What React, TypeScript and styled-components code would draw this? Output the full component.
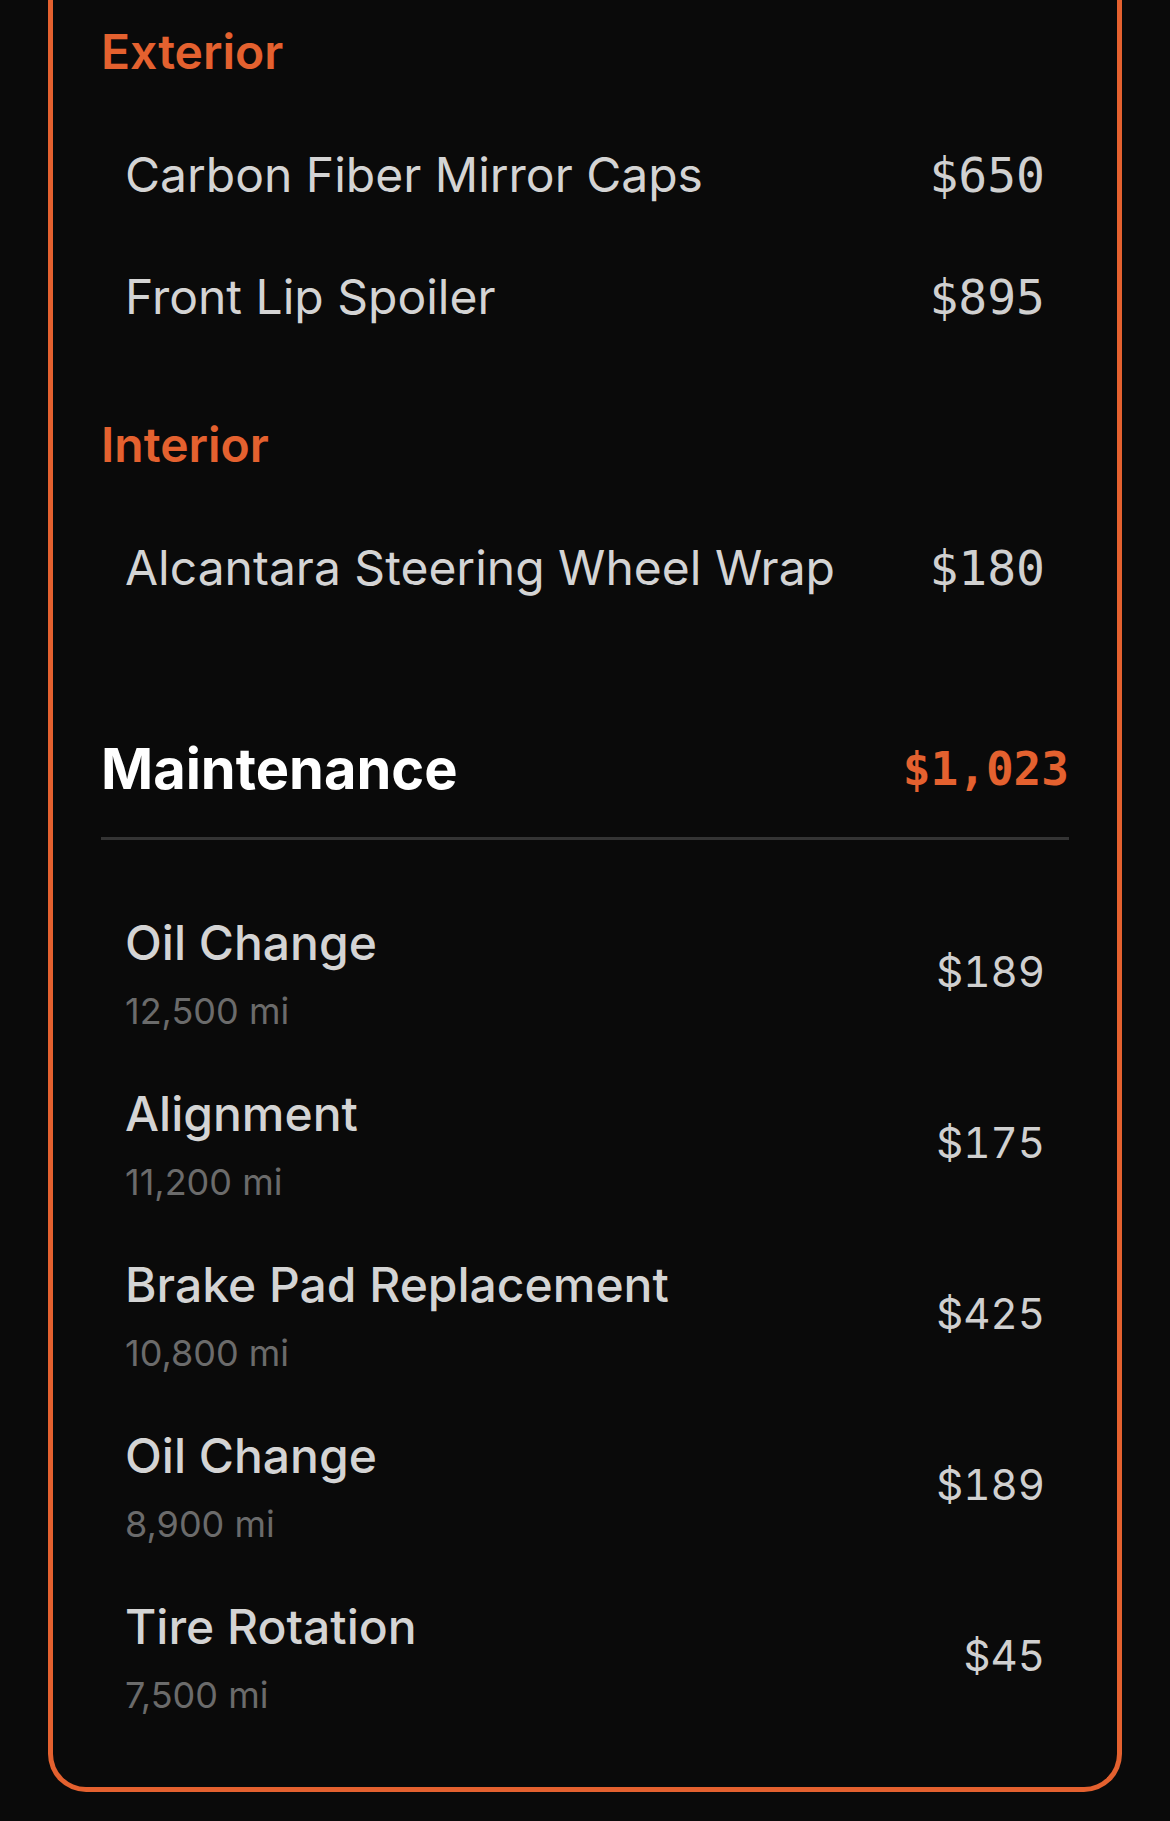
import React from "react";
import styled, { createGlobalStyle } from "styled-components";

const ORANGE = "#e4612f";

const GlobalStyle = createGlobalStyle`
  html, body {
    margin: 0;
    padding: 0;
    background: #0a0a0a;
  }
  body {
    font-family: Inter, "Noto Sans", sans-serif;
    -webkit-font-smoothing: antialiased;
  }
`;

const Page = styled.div`
  padding: 0 48px 48px;
  background: #0a0a0a;
  min-height: 1821px;
  box-sizing: border-box;
`;

const Card = styled.section`
  border: 5px solid ${ORANGE};
  border-top: none;
  border-radius: 0 0 38px 38px;
  padding: 19px 48px 46px;
`;

const Group = styled.div<{ $first?: boolean }>`
  margin-top: ${(p) => (p.$first ? "0" : "54px")};
`;

const GroupTitle = styled.h3`
  margin: 0 0 29px;
  font-family: Inter, sans-serif;
  font-weight: 600;
  font-size: 48px;
  line-height: 66px;
  color: ${ORANGE};
`;

const AccessoryRow = styled.div`
  display: flex;
  justify-content: space-between;
  align-items: center;
  padding: 25px 24px;
`;

const AccessoryName = styled.span`
  font-family: Inter, sans-serif;
  font-weight: 400;
  font-size: 48px;
  line-height: 72px;
  color: #d4d4d4;
`;

const MonoPrice = styled.span`
  font-family: "DejaVu Sans Mono", "Liberation Mono", monospace;
  font-size: 48px;
  line-height: 72px;
  color: #d0d0d0;
`;

const Section = styled.div`
  margin-top: 98px;
`;

const SectionHeader = styled.div`
  display: flex;
  justify-content: space-between;
  align-items: center;
  padding-bottom: 26px;
  border-bottom: 3px solid #343434;
`;

const SectionTitle = styled.h2`
  margin: 0;
  font-family: Inter, sans-serif;
  font-weight: 700;
  font-size: 56px;
  line-height: 84px;
  color: #ffffff;
`;

const SectionTotal = styled.span`
  font-family: "DejaVu Sans Mono", "Liberation Mono", monospace;
  font-weight: 700;
  font-size: 46px;
  color: ${ORANGE};
`;

const ServiceList = styled.div`
  padding-top: 46px;
`;

const ServiceRow = styled.div`
  display: flex;
  justify-content: space-between;
  align-items: center;
  padding: 21px 24px 22px;
`;

const ServiceInfo = styled.div`
  display: flex;
  flex-direction: column;
`;

const ServiceName = styled.span`
  font-family: Inter, sans-serif;
  font-weight: 500;
  font-size: 48px;
  line-height: 72px;
  color: #d4d4d4;
`;

const ServiceMiles = styled.span`
  margin-top: 8px;
  font-family: Inter, sans-serif;
  font-weight: 400;
  font-size: 36px;
  line-height: 48px;
  color: #6b6b6b;
`;

const ServicePrice = styled.span`
  font-family: Inter, sans-serif;
  font-weight: 400;
  font-size: 42px;
  font-variant-numeric: tabular-nums;
  color: #d0d0d0;
`;

const groups = [
  {
    title: "Exterior",
    items: [
      { name: "Carbon Fiber Mirror Caps", price: "$650" },
      { name: "Front Lip Spoiler", price: "$895" },
    ],
  },
  {
    title: "Interior",
    items: [{ name: "Alcantara Steering Wheel Wrap", price: "$180" }],
  },
];

const services = [
  { name: "Oil Change", miles: "12,500 mi", price: "$189" },
  { name: "Alignment", miles: "11,200 mi", price: "$175" },
  { name: "Brake Pad Replacement", miles: "10,800 mi", price: "$425" },
  { name: "Oil Change", miles: "8,900 mi", price: "$189" },
  { name: "Tire Rotation", miles: "7,500 mi", price: "$45" },
];

export default function App() {
  return (
    <>
      <GlobalStyle />
      <Page>
        <Card>
          {groups.map((g, gi) => (
            <Group key={g.title} $first={gi === 0}>
              <GroupTitle>{g.title}</GroupTitle>
              {g.items.map((it) => (
                <AccessoryRow key={it.name}>
                  <AccessoryName>{it.name}</AccessoryName>
                  <MonoPrice>{it.price}</MonoPrice>
                </AccessoryRow>
              ))}
            </Group>
          ))}
          <Section>
            <SectionHeader>
              <SectionTitle>Maintenance</SectionTitle>
              <SectionTotal>$1,023</SectionTotal>
            </SectionHeader>
            <ServiceList>
              {services.map((s, i) => (
                <ServiceRow key={i}>
                  <ServiceInfo>
                    <ServiceName>{s.name}</ServiceName>
                    <ServiceMiles>{s.miles}</ServiceMiles>
                  </ServiceInfo>
                  <ServicePrice>{s.price}</ServicePrice>
                </ServiceRow>
              ))}
            </ServiceList>
          </Section>
        </Card>
      </Page>
    </>
  );
}
